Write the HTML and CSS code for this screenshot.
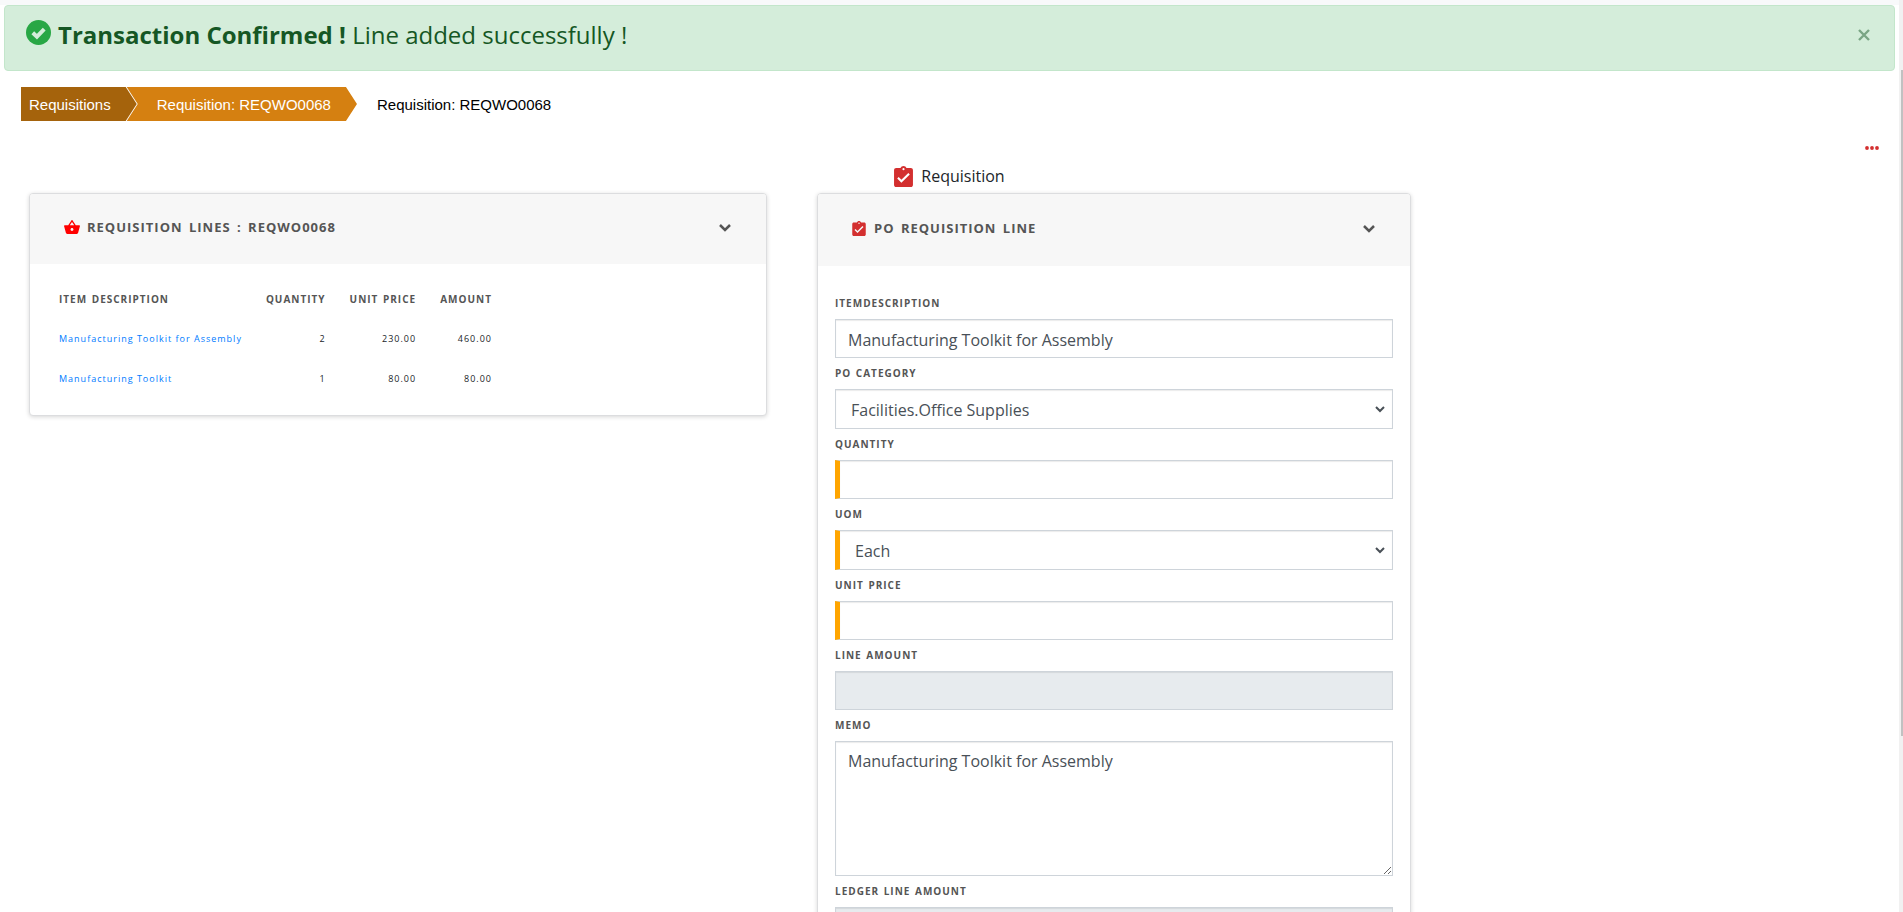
FILE: index.html
```html
<!DOCTYPE html>
<html lang="en">
<head>
<meta charset="utf-8">
<title>Requisition: REQWO0068</title>
<link rel="stylesheet" href="styles.css">
</head>
<body>
<svg class="defs" aria-hidden="true">
  <symbol id="clipboard" viewBox="3 1 18 20"><path fill="currentColor" fill-rule="evenodd" d="M19 3h-4.180C14.400 1.840 13.300 1 12 1S9.600 1.840 9.180 3H5c-1.100 0-2 .9-2 2v14c0 1.100.9 2 2 2h14c1.100 0 2-.9 2-2V5c0-1.100-.9-2-2-2zM12 3a1 1 0 1 1 0 2 1 1 0 0 1 0-2zM10 17l-4-4 1.410-1.410L10 14.170l6.590-6.590L18 9z"/></symbol>
  <symbol id="chevron" viewBox="0 0 12 9"><path d="M1 2l5 5 5-5" fill="none" stroke="currentColor" stroke-width="2.500"/></symbol>
</svg>
<div class="shell">
  <main class="page">
    <div class="alert" role="alert">
      <svg class="alert-icon" viewBox="0 0 24 24" aria-hidden="true"><circle cx="12" cy="12" r="12" fill="#28a745"/><path d="M6.500 12.200l4 3.800 7-7.200" fill="none" stroke="#d4edda" stroke-width="3.800"/></svg>
      <p class="alert-text"><strong>Transaction Confirmed !</strong> Line added successfully !</p>
      <button class="close" type="button" aria-label="Close"><svg viewBox="0 0 12 12"><path d="M1 1l10 10M11 1L1 11" stroke="currentColor" stroke-width="2.400"/></svg></button>
    </div>
    <nav class="crumbs" aria-label="Breadcrumb">
      <a class="crumb crumb-first" href="#">Requisitions</a>
      <a class="crumb crumb-second" href="#">Requisition: REQWO0068</a>
      <span class="crumb-current">Requisition: REQWO0068</span>
    </nav>
    <div class="tools"><button class="more" type="button" aria-label="More actions"><svg viewBox="0 0 14 4"><g fill="currentColor"><circle cx="2" cy="2" r="1.900"/><circle cx="7" cy="2" r="1.900"/><circle cx="12" cy="2" r="1.900"/></g></svg></button></div>
    <h1 class="heading"><svg class="heading-icon"><use href="#clipboard"/></svg>Requisition</h1>
    <div class="columns">
      <section class="card">
        <header class="card-head">
          <svg class="basket" viewBox="1 2 22 19" aria-hidden="true"><path fill="#f00" fill-rule="evenodd" d="M17.210 9l-4.380-6.560c-.19-.28-.51-.42-.83-.42s-.64.14-.83.430L6.790 9H2c-.55 0-1 .45-1 1 0 .09.010.18.040.270l2.540 9.270c.23.840 1 1.460 1.920 1.460h13c.92 0 1.690-.62 1.930-1.460l2.540-9.270L23 10c0-.55-.45-1-1-1h-4.790zM9 9l3-4.400L15 9H9zm3 8c-1.100 0-2-.9-2-2s.9-2 2-2 2 .9 2 2-.9 2-2 2z"/></svg>
          <h2 class="card-title">Requisition Lines : REQWO0068</h2>
          <button class="toggle" type="button" aria-label="Toggle requisition lines"><svg><use href="#chevron"/></svg></button>
        </header>
        <div class="lines-body">
          <table class="lines">
            <thead><tr><th>Item Description</th><th>Quantity</th><th>Unit Price</th><th>Amount</th></tr></thead>
            <tbody>
              <tr><td><a href="#">Manufacturing Toolkit for Assembly</a></td><td>2</td><td>230.00</td><td>460.00</td></tr>
              <tr><td><a href="#">Manufacturing Toolkit</a></td><td>1</td><td>80.00</td><td>80.00</td></tr>
            </tbody>
          </table>
        </div>
      </section>
      <section class="card">
        <header class="card-head card-head-form">
          <svg class="title-icon"><use href="#clipboard"/></svg>
          <h2 class="card-title">PO Requisition Line</h2>
          <button class="toggle" type="button" aria-label="Toggle requisition line"><svg><use href="#chevron"/></svg></button>
        </header>
        <form class="form">
          <label for="item">ItemDescription</label>
          <input class="control" id="item" type="text" value="Manufacturing Toolkit for Assembly">
          <label for="category">PO Category</label>
          <select class="control" id="category"><option>Facilities.Office Supplies</option></select>
          <label for="quantity">Quantity</label>
          <input class="control required" id="quantity" type="text">
          <label for="uom">UOM</label>
          <select class="control required" id="uom"><option>Each</option></select>
          <label for="price">Unit Price</label>
          <input class="control required" id="price" type="text">
          <label for="amount">Line Amount</label>
          <input class="control" id="amount" type="text" readonly>
          <label for="memo">Memo</label>
          <textarea class="control" id="memo" rows="5">Manufacturing Toolkit for Assembly</textarea>
          <label for="ledger">Ledger Line Amount</label>
          <input class="control" id="ledger" type="text" readonly>
        </form>
      </section>
    </div>
  </main>
  <div class="track" aria-hidden="true"><div class="thumb"></div></div>
</div>
</body>
</html>
```
FILE: styles.css
```css
* { box-sizing: border-box; }
body { margin: 0; background: #fff; color: #212529; font-family: "Open Sans", "Noto Sans", sans-serif; font-size: 16px; font-weight: 400; }
button { border: 0; padding: 0; background: none; color: inherit; cursor: pointer; }
button svg { display: block; }
.defs { display: none; }
.shell { display: flex; height: 100vh; overflow: hidden; }
.page { flex: 1; min-width: 0; padding-top: 5px; background: linear-gradient(#f8f9fa 5px, #fff 5px); }
.track { width: 4px; padding: 70px 0 0 2px; background: #f1f1f1; }
.thumb { height: 73vh; background: #c1c1c1; }

.alert { display: flex; align-items: flex-start; margin: 0 4px; height: 66px; padding: 14px 24px 0 21px; border: 1px solid #c3e6cb; border-radius: 4px; background: #d4edda; color: #155724; }
.alert-icon { width: 25px; height: 25px; margin-right: 7px; }
.alert-text { flex: 1; margin: 0; font-size: 24px; line-height: 30px; }
.alert-text strong { font-weight: 700; }
.close { margin-top: 9px; color: #7aa584; }
.close svg { width: 12px; height: 12px; }

.crumbs { display: flex; margin: 16px 0 0 21px; height: 34px; font: 400 15px/36px "Liberation Sans", Arial, sans-serif; color: #000; }
.crumb { color: #fff; text-decoration: none; }
.crumb-first { padding: 0 26px 0 8px; background: #a5630c; clip-path: polygon(0 0, calc(100% - 11px) 0, 100% 50%, calc(100% - 11px) 100%, 0 100%); }
.crumb-second { margin-left: -10px; padding: 0 26px 0 30px; background: #d58011; clip-path: polygon(0 0, calc(100% - 11px) 0, 100% 50%, calc(100% - 11px) 100%, 0 100%, 11px 50%); }
.crumb-current { margin-left: 20px; }

.tools { display: flex; justify-content: flex-end; padding: 25px 20px 0 0; }
.more { color: #d32f2f; }
.more svg { width: 14px; height: 4px; }
.heading { display: flex; align-items: center; justify-content: center; margin: 14px 0 4px; font-size: 16px; line-height: 25px; font-weight: 400; }
.heading-icon { width: 19px; height: 21px; margin-right: 8px; color: #d32f2f; }

.columns { display: grid; grid-template-columns: 738fr 594fr 409fr; gap: 50px; align-items: start; padding: 0 29px; }
.card { min-width: 0; border: 1px solid #dcdddf; border-radius: 4px; background: #fff; box-shadow: 0 1px 4px rgba(0, 0, 0, .16); }
.card-head { display: flex; align-items: center; height: 70px; padding: 0 35px 4px 34px; background: #f7f7f7; border-radius: 3px 3px 0 0; color: #555; }
.card-head-form { height: 72px; }
.card-title { flex: 1; margin: 0; font-size: 13px; line-height: 20px; font-weight: 700; letter-spacing: 1px; word-spacing: 2px; text-transform: uppercase; }
.basket { width: 16px; height: 14px; margin-right: 7px; }
.title-icon { width: 14px; height: 15px; margin-right: 8px; color: #d32f2f; }
.toggle svg { width: 12px; height: 9px; }

.lines-body { padding: 15px 17px 16px; }
.lines { border-collapse: collapse; line-height: 16px; letter-spacing: 1px; }
.lines th, .lines td { padding: 12px; text-align: right; }
.lines td { font-size: 9px; }
.lines th { color: #555; font-size: 10px; font-weight: 700; text-transform: uppercase; word-spacing: 1px; }
.lines th:first-child, .lines td:first-child { text-align: left; }
.lines a { color: #007bff; text-decoration: none; }

.form { display: flex; flex-direction: column; padding: 22px 17px 40px; }
label { padding: 7px 0 8px; color: #555; font-size: 10px; line-height: 16px; font-weight: 700; letter-spacing: 1px; word-spacing: 1px; text-transform: uppercase; }
.control { width: 100%; height: 39px; margin: 0; padding: 7px 12px 5px; border: 1px solid #ced4da; border-radius: 0; background: #fff; color: #495057; box-shadow: inset 0 1px 1px rgba(0, 0, 0, .08); font-family: inherit; font-size: 16px; line-height: 25px; font-weight: 400; }
select.control { height: 40px; padding: 7px 28px 5px 15px; appearance: none; background: #fff url("data:image/svg+xml,%3Csvg xmlns='http://www.w3.org/2000/svg' viewBox='0 0 10 7'%3E%3Cpath d='M1 1l4 4 4-4' fill='none' stroke='%23495057' stroke-width='2'/%3E%3C/svg%3E") no-repeat right 7px center / 10px 7px; }
textarea.control { height: 135px; resize: vertical; }
.control.required { border-left: 5px solid orange; }
.control:read-only:not(select) { background: #e7ebee; }
```
